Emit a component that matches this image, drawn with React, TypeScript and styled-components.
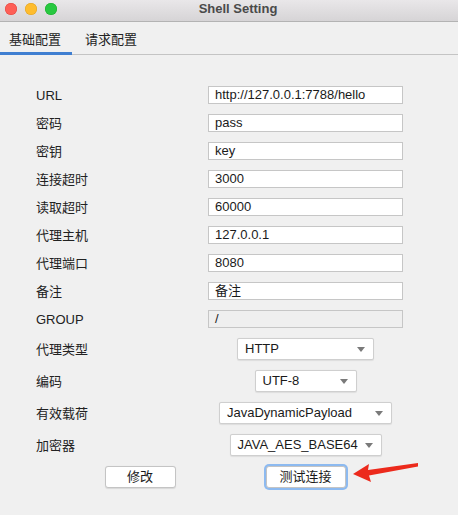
import React from "react";
import styled, { createGlobalStyle } from "styled-components";

const Global = createGlobalStyle`
  html, body { margin: 0; padding: 0; background: #f0f0f0; }
  body { font-family: "Liberation Sans", "Noto Sans CJK SC", sans-serif; font-size: 13px; color: #222; line-height: 16px; }
`;

const Window = styled.div`
  position: relative;
  width: 458px;
  height: 515px;
  background: #f0f0f0;
  display: flex;
  flex-direction: column;
  overflow: hidden;
`;

const TitleBar = styled.div`
  height: 22px;
  background: linear-gradient(#e9e7e9, #d6d4d6);
  border-bottom: 1px solid #b3b3b3;
  display: flex;
  align-items: center;
  padding: 0 5px 3px;
  box-sizing: border-box;
  flex-shrink: 0;
`;

const Lights = styled.div`
  display: flex;
  gap: 8px;
  width: 56px;
`;

const Light = styled.span<{ $c: string; $b: string }>`
  width: 12px;
  height: 12px;
  border-radius: 50%;
  background: ${(p) => p.$c};
  box-shadow: inset 0 0 0 0.5px ${(p) => p.$b};
`;

const Title = styled.div`
  flex: 1;
  text-align: center;
  font-weight: bold;
  font-size: 13px;
  color: #4a4a4a;
  padding-right: 38px;
`;

const Tabs = styled.div`
  display: flex;
  height: 33px;
  border-bottom: 1px solid #c4c4c4;
  flex-shrink: 0;
  box-sizing: border-box;
`;

const Tab = styled.div<{ $active?: boolean }>`
  width: ${(p) => (p.$active ? "72px" : "auto")};
  padding: ${(p) => (p.$active ? "5px 0 0 9px" : "3px 0 0 13px")};
  box-sizing: border-box;
  display: flex;
  align-items: center;
  font-size: 13px;
  color: #222;
  border-bottom: ${(p) => (p.$active ? "3px solid #3f7fd1" : "none")};
  margin-bottom: ${(p) => (p.$active ? "-1px" : "0")};
`;

const Form = styled.div`
  display: grid;
  grid-template-columns: 208px 195px;
  row-gap: 10px;
  padding-top: 31px;
`;

const Label = styled.div`
  padding-left: 36px;
  padding-top: 1px;
  display: flex;
  align-items: center;
  font-size: 13px;
  line-height: 16px;
  color: #222;
`;

const Input = styled.div<{ $disabled?: boolean }>`
  height: 18px;
  box-sizing: border-box;
  border: 1px solid #c6c6c6;
  background: ${(p) => (p.$disabled ? "#efefef" : "#fff")};
  padding-left: 6px;
  display: flex;
  align-items: center;
  font-size: 13px;
  line-height: 16px;
  color: #1a1a1a;
`;

const SelectCell = styled.div`
  display: flex;
  justify-content: center;
`;

const Select = styled.div<{ $w: number }>`
  width: ${(p) => p.$w}px;
  height: 22px;
  box-sizing: border-box;
  border: 1px solid #cfcfcf;
  border-radius: 2px;
  background: #fff;
  box-shadow: 0 0.5px 1px rgba(0, 0, 0, 0.08);
  display: flex;
  align-items: center;
  justify-content: space-between;
  padding: 0 8px 0 7px;
  font-size: 13px;
  line-height: 16px;
  color: #1a1a1a;
`;

const Caret = styled.span`
  width: 0;
  height: 0;
  border-left: 4.5px solid transparent;
  border-right: 4.5px solid transparent;
  border-top: 5px solid #7a7a7a;
`;

const ButtonCell = styled.div<{ $pad?: number }>`
  display: flex;
  justify-content: center;
  padding-left: ${(p) => p.$pad ?? 0}px;
`;

const Button = styled.div<{ $w: number; $focus?: boolean }>`
  width: ${(p) => p.$w}px;
  height: 22px;
  box-sizing: border-box;
  border: 1px solid #c4c4c4;
  border-radius: 3px;
  background: #fff;
  display: flex;
  align-items: center;
  justify-content: center;
  font-size: 13px;
  line-height: 16px;
  color: #1a1a1a;
  box-shadow: ${(p) => (p.$focus ? "0 0 0 2px #8dbaf0" : "0 0.5px 1px rgba(0,0,0,0.1)")};
`;

const Arrow = styled.svg`
  position: absolute;
  left: 350px;
  top: 458px;
`;

const fields: [string, string, boolean?][] = [
  ["URL", "http://127.0.0.1:7788/hello"],
  ["密码", "pass"],
  ["密钥", "key"],
  ["连接超时", "3000"],
  ["读取超时", "60000"],
  ["代理主机", "127.0.0.1"],
  ["代理端口", "8080"],
  ["备注", "备注"],
  ["GROUP", "/", true],
];

const selects: [string, string, number][] = [
  ["代理类型", "HTTP", 137],
  ["编码", "UTF-8", 102],
  ["有效载荷", "JavaDynamicPayload", 173],
  ["加密器", "JAVA_AES_BASE64", 152],
];

export default function App() {
  return (
    <Window>
      <Global />
      <TitleBar>
        <Lights>
          <Light $c="#fe5f57" $b="#e0443e" />
          <Light $c="#febc2e" $b="#dea123" />
          <Light $c="#28c840" $b="#1aab29" />
        </Lights>
        <Title>Shell Setting</Title>
      </TitleBar>
      <Tabs>
        <Tab $active>基础配置</Tab>
        <Tab>请求配置</Tab>
      </Tabs>
      <Form>
        {fields.map(([l, v, d]) => (
          <React.Fragment key={l}>
            <Label>{l}</Label>
            <Input $disabled={d}>{v}</Input>
          </React.Fragment>
        ))}
        {selects.map(([l, v, w]) => (
          <React.Fragment key={l}>
            <Label>{l}</Label>
            <SelectCell>
              <Select $w={w}>
                <span>{v}</span>
                <Caret />
              </Select>
            </SelectCell>
          </React.Fragment>
        ))}
        <ButtonCell $pad={72}>
          <Button $w={71}>修改</Button>
        </ButtonCell>
        <ButtonCell>
          <Button $w={80} $focus>测试连接</Button>
        </ButtonCell>
      </Form>
      <Arrow width="72" height="30" viewBox="0 0 72 30">
        <path d="M3 16 L19 6 L18 12 L68 5 L68 8.5 L19 17.5 L21 24 Z" fill="#ec2a1c" />
      </Arrow>
    </Window>
  );
}
